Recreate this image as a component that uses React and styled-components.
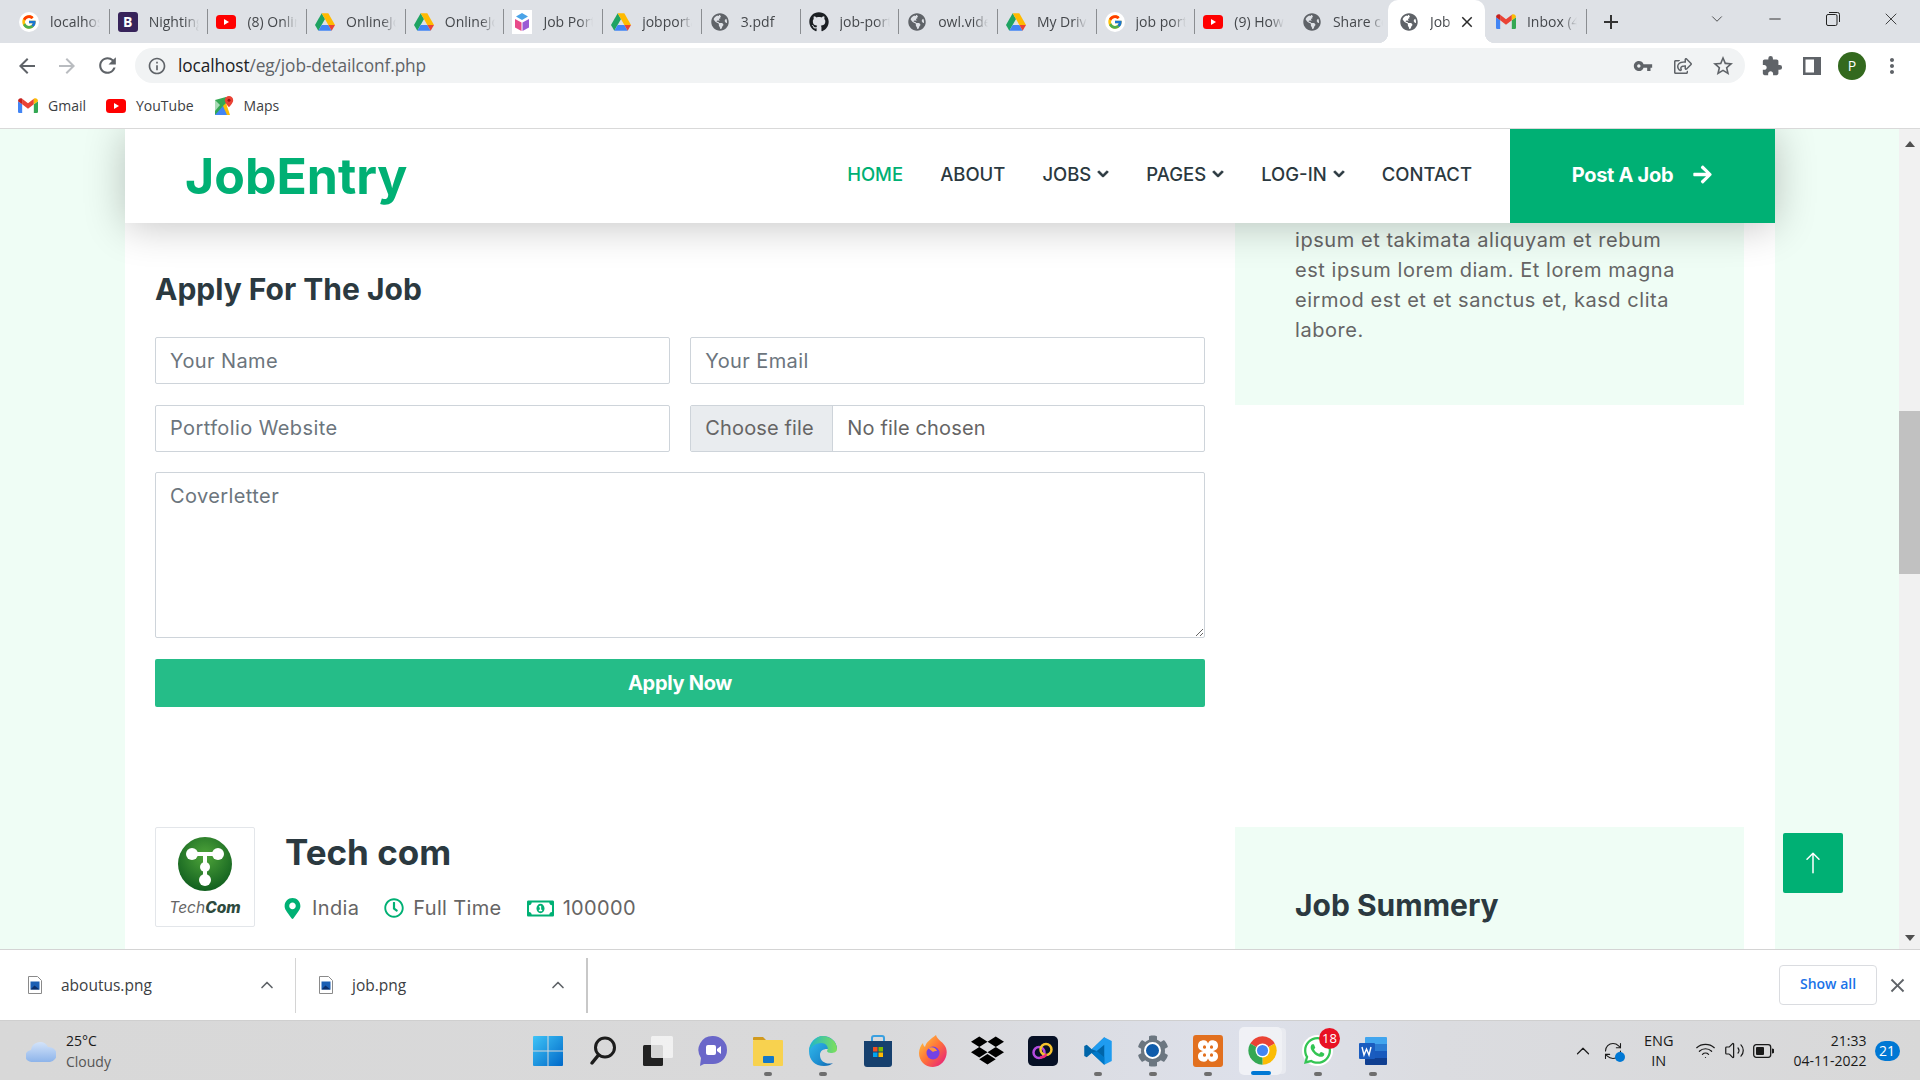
import styled, { createGlobalStyle } from "styled-components";
import {
  MdArrowBack, MdArrowForward, MdRefresh, MdInfoOutline, MdVpnKey, MdStarBorder,
  MdMoreVert, MdExtension, MdClose, MdAdd,
} from "react-icons/md";
import {
  FaRegShareSquare, FaGithub, FaGlobeAmericas, FaChevronDown, FaArrowRight, FaMapMarkerAlt,
  FaRegClock, FaRegMoneyBillAlt, FaDropbox, FaCog, FaWhatsapp,
} from "react-icons/fa";
import { BsArrowUp } from "react-icons/bs";
import { FcGoogle } from "react-icons/fc";
import { ChevronDown, ChevronUp, Minus, X, Wifi, Volume2, RefreshCw } from "lucide-react";

const GREEN = "#00B074";
const MINT = "#EFFDF5";
const DARK = "#2B3940";
const TEXT = "#666565";
const BODY = `Inter, "Open Sans", sans-serif`;
const UI = `"Open Sans", "Noto Sans", sans-serif`;

const GlobalStyle = createGlobalStyle`
  html, body { margin: 0; padding: 0; background: #fff; }
  * { box-sizing: border-box; }
`;

/* ---------- small drawings ---------- */

const GoogleBadge = styled.span`
  width: 20px; height: 20px; border-radius: 50%; background: #fff;
  display: flex; align-items: center; justify-content: center;
`;
const GoogleIcon = () => <GoogleBadge><FcGoogle size={16} /></GoogleBadge>;

const BootstrapBadge = styled.span`
  width: 20px; height: 20px; border-radius: 3px; background: #37235a; color: #fff;
  font: 700 14px ${UI}; display: flex; align-items: center; justify-content: center;
`;
const BootstrapIcon = () => <BootstrapBadge>B</BootstrapBadge>;

const YoutubeIcon = () => (
  <svg width="20" height="14" viewBox="0 0 20 14">
    <rect width="20" height="14" rx="3.5" fill="#f00" />
    <path d="M8 4l5 3-5 3z" fill="#fff" />
  </svg>
);

const DriveIcon = () => (
  <svg width="20" height="18" viewBox="0 0 24 21">
    <path d="M8 0l4 7-8 14-4-7z" fill="#1ea362" />
    <path d="M8 0h8l8 14h-8z" fill="#ffba00" />
    <path d="M8 14h8l4 7H4z" fill="#4285f4" />
    <path d="M16 14h8l-4 7z" fill="#ea4335" />
  </svg>
);

const GmailIcon = () => (
  <svg width="20" height="15" viewBox="0 0 24 18">
    <path d="M0 4v12.5A1.5 1.5 0 0 0 1.5 18H5V7.5z" fill="#4285f4" />
    <path d="M24 4v12.5a1.5 1.5 0 0 1-1.5 1.5H19V7.5z" fill="#34a853" />
    <path d="M5 7.5l7 5.25 7-5.25V1l-7 5.25L5 1z" fill="#ea4335" />
    <path d="M0 4c0-3 3-4.500 5-3v6.500z" fill="#c5221f" />
    <path d="M24 4c0-3-3-4.500-5-3v6.500z" fill="#fbbc04" />
  </svg>
);

const MapsIcon = () => (
  <svg width="20" height="20" viewBox="0 0 20 20">
    <path d="M1 4l11-3v15L1 19z" fill="#34a853" />
    <path d="M1 19l8-9 6 9z" fill="#4285f4" />
    <path d="M1 4l5 5-5 6z" fill="#a8dab5" />
    <path d="M9 10l3-3 4 12h-3z" fill="#fbbc04" />
    <path d="M15 0a4.200 4.200 0 0 0-4.200 4.200C10.800 7.300 15 11 15 11s4.200-3.700 4.200-6.800A4.200 4.200 0 0 0 15 0z" fill="#ea4335" />
    <circle cx="15" cy="4.200" r="1.500" fill="#a50e0e" />
  </svg>
);

const CubeIcon = () => (
  <svg width="20" height="24" viewBox="0 0 20 24">
    <rect width="20" height="24" fill="#fff" />
    <path d="M10 3l6 3.500-6 3.500-6-3.500z" fill="#4aa3e8" />
    <path d="M3 9l6.500 3.500V21L3 17.500z" fill="#e84a8a" />
    <path d="M17 9l-6.500 3.500V21l6.500-3.500z" fill="#9b5bd4" />
  </svg>
);

const Globe = styled(FaGlobeAmericas)`color: #5f6368;`;
const Octocat = styled(FaGithub)`color: #1b1f23;`;

const FileIcon = () => (
  <svg width="14" height="18" viewBox="0 0 14 18">
    <path d="M.5.500h9l4 4v13H.500z" fill="#fff" stroke="#8a8a8a" />
    <rect x="2.500" y="5.500" width="9" height="8" fill="#1b5fb4" />
    <path d="M2.500 13.500l4-4 5 4z" fill="#0b2f6b" />
  </svg>
);

const CloudIcon = () => (
  <svg width="30" height="26" viewBox="0 0 30 26">
    <defs>
      <linearGradient id="cloud" x1="0" y1="0" x2="0" y2="1">
        <stop offset="0" stopColor="#d3e3f9" />
        <stop offset="1" stopColor="#8db4ea" />
      </linearGradient>
    </defs>
    <path d="M6 24a6 6 0 0 1-1-12A9 9 0 0 1 22 9a7.500 7.500 0 0 1 2 15z" fill="url(#cloud)" />
  </svg>
);

const WindowsIcon = () => (
  <svg width="30" height="30" viewBox="0 0 30 30">
    <defs>
      <linearGradient id="win" x1="0" y1="0" x2="1" y2="1">
        <stop offset="0" stopColor="#3fc4f7" />
        <stop offset="1" stopColor="#0068c8" />
      </linearGradient>
    </defs>
    <path d="M0 1a1 1 0 0 1 1-1h13.500v14.500H0zM15.500 0H29a1 1 0 0 1 1 1v13.500H15.500zM0 15.500h14.500V30H1a1 1 0 0 1-1-1zM15.500 15.500H30V29a1 1 0 0 1-1 1H15.500z" fill="url(#win)" />
  </svg>
);

const SearchIcon = () => (
  <svg width="28" height="30" viewBox="0 0 28 30" fill="none" stroke="#1c1c1c" strokeLinecap="round">
    <circle cx="16" cy="11.500" r="9.500" strokeWidth="3" />
    <path d="M9.500 19L3 27" strokeWidth="3.500" />
  </svg>
);

const TaskViewIcon = () => (
  <svg width="30" height="30" viewBox="0 0 30 30">
    <rect x="0" y="9" width="20" height="21" rx="1.500" fill="#222" />
    <rect x="8" y="0" width="22" height="22" rx="1.500" fill="#f4f4f4" opacity=".85" />
  </svg>
);

const ChatIcon = () => (
  <svg width="30" height="32" viewBox="0 0 30 32">
    <path d="M15 1a14 14 0 0 1 0 28H6l-4 2 1-8A14 14 0 0 1 15 1z" fill="#6a67c9" />
    <rect x="8" y="10" width="10" height="10" rx="2" fill="#fff" />
    <path d="M19 14l4-3v8l-4-3z" fill="#fff" />
  </svg>
);

const FolderIcon = () => (
  <svg width="30" height="30" viewBox="0 0 30 30">
    <path d="M0 2a1 1 0 0 1 1-1h9l3 3h-13z" fill="#d19a1e" />
    <rect y="4" width="30" height="26" rx="1" fill="#f8d24f" />
    <rect x="10" y="20" width="11" height="7" rx="1" fill="#1478c8" />
  </svg>
);

const EdgeIcon = () => (
  <svg width="30" height="32" viewBox="0 0 30 32">
    <defs>
      <linearGradient id="edge" x1="0" y1="0" x2="1" y2="1">
        <stop offset="0" stopColor="#35c1f1" />
        <stop offset=".6" stopColor="#1d8ed0" />
        <stop offset="1" stopColor="#0c59a4" />
      </linearGradient>
      <linearGradient id="edgeTop" x1="0" y1="0" x2="1" y2="0">
        <stop offset="0" stopColor="#1fb6c9" />
        <stop offset="1" stopColor="#7ee05a" />
      </linearGradient>
    </defs>
    <path d="M15 1C7 1 1 8 1 16c0 9 6 15 15 15 4 0 7-1 9-3-6 2-13-1-13-8 0-4 3-6 7-6h10C29 7 23 1 15 1z" fill="url(#edge)" />
    <path d="M15 1c6 0 14 5 14 13 0 3-3 4-6 4-2 0-4-1-4-2 2-3 0-8-6-8-6 0-10 4-12 8C2 8 8 1 15 1z" fill="url(#edgeTop)" />
  </svg>
);

const StoreIcon = () => (
  <svg width="28" height="32" viewBox="0 0 28 32">
    <path d="M8 6V3a2 2 0 0 1 2-2h8a2 2 0 0 1 2 2v3" fill="none" stroke="#3aa0e0" strokeWidth="2" />
    <path d="M0 6h28v23a3 3 0 0 1-3 3H3a3 3 0 0 1-3-3z" fill="#16406e" />
    <rect x="9" y="12" width="4.500" height="4.500" fill="#f25022" />
    <rect x="14.500" y="12" width="4.500" height="4.500" fill="#7fba00" />
    <rect x="9" y="17.500" width="4.500" height="4.500" fill="#00a4ef" />
    <rect x="14.500" y="17.500" width="4.500" height="4.500" fill="#ffb900" />
  </svg>
);

const FirefoxIcon = () => (
  <svg width="30" height="32" viewBox="0 0 30 32">
    <defs>
      <linearGradient id="fox" x1="0" y1="0" x2="1" y2="1">
        <stop offset="0" stopColor="#ffd23e" />
        <stop offset=".5" stopColor="#ff7139" />
        <stop offset="1" stopColor="#e31587" />
      </linearGradient>
    </defs>
    <path d="M18 0c1 5 8 7 10 13 3 9-4 19-13 19C7 32 1 26 1 18c0-4 2-8 4-10 0 2 1 3 2 4 1-5 6-8 11-12z" fill="url(#fox)" />
    <circle cx="15" cy="18" r="6.500" fill="#7542e5" />
    <path d="M10 13c4-2 8 0 9 3-2 0-3 0-4 1z" fill="#ff9640" />
  </svg>
);

const AdobeBadge = styled.span`
  width: 30px; height: 30px; border-radius: 5px; background: #061025;
  display: flex; align-items: center; justify-content: center;
`;
const AdobeIcon = () => (
  <AdobeBadge>
    <svg width="22" height="18" viewBox="0 0 22 18" fill="none" strokeWidth="2.500">
      <circle cx="7" cy="10.500" r="5.500" stroke="#b44be0" />
      <circle cx="14" cy="7.500" r="5.500" stroke="#f5c22e" />
      <path d="M8 15c3 1 6-1 6-3" stroke="#ee2a7b" />
    </svg>
  </AdobeBadge>
);

const VsCodeIcon = () => (
  <svg width="30" height="32" viewBox="0 0 24 24">
    <path d="M17 1L7 10.500 3 7 1 8v8l2 1 4-3.500L17 23l2-3V4z" fill="#0065a9" />
    <path d="M17 1l6 3v16l-6 3V7l-6 5-4-1.500z" fill="#1f9cf0" />
    <path d="M17 17v6l-10-9.500L11 12z" fill="#0078c8" />
  </svg>
);

const SettingsWrap = styled.span`
  position: relative; display: flex; align-items: center; justify-content: center; color: #6b7680;
  &::after {
    content: ""; position: absolute; width: 13px; height: 13px; border-radius: 50%;
    background: #0f5cab; border: 2px solid #fff; box-sizing: content-box;
  }
`;
const SettingsIcon = () => <SettingsWrap><FaCog size={32} /></SettingsWrap>;

const XamppIcon = () => (
  <svg width="30" height="32" viewBox="0 0 30 30" preserveAspectRatio="none">
    <rect width="30" height="30" rx="3" fill="#e2701f" />
    <path d="M11 5c-4 0-6 2-6 5s2 4 5 5c-3 1-5 2-5 5s2 5 6 5c2 0 3-1 4-3 1 2 2 3 4 3 4 0 6-2 6-5s-2-4-5-5c3-1 5-2 5-5s-2-5-6-5c-2 0-3 1-4 3-1-2-2-3-4-3z" fill="#fff" />
    <rect x="10" y="9.500" width="3" height="3.500" rx="1.500" fill="#e2701f" />
    <rect x="17" y="9.500" width="3" height="3.500" rx="1.500" fill="#e2701f" />
    <rect x="10" y="17" width="3" height="3.500" rx="1.500" fill="#e2701f" />
    <rect x="17" y="17" width="3" height="3.500" rx="1.500" fill="#e2701f" />
  </svg>
);

const ChromeIcon = () => (
  <svg width="31" height="31" viewBox="0 0 24 24">
    <path d="M12 12L2.500 6.500a11 11 0 0 1 19 0z" fill="#ea4335" />
    <path d="M12 12l9.500-5.500A11 11 0 0 1 12 23z" fill="#fbbc04" />
    <path d="M12 12v11A11 11 0 0 1 2.500 6.500z" fill="#34a853" />
    <circle cx="12" cy="12" r="5.400" fill="#fff" />
    <circle cx="12" cy="12" r="4.300" fill="#4285f4" />
  </svg>
);

const WhatsappBadge = styled.span`
  width: 31px; height: 31px; border-radius: 50%; background: #fff; color: #33c553;
  display: flex; align-items: center; justify-content: center;
`;
const WhatsappIcon = () => <WhatsappBadge><FaWhatsapp size={31} /></WhatsappBadge>;

const WordIcon = () => (
  <svg width="30" height="30" viewBox="0 0 30 30">
    <path d="M8 1h20a1 1 0 0 1 1 1v6H7V2a1 1 0 0 1 1-1z" fill="#41a5ee" />
    <rect x="7" y="8" width="22" height="7" fill="#2b7cd3" />
    <rect x="7" y="15" width="22" height="7" fill="#185abd" />
    <path d="M7 22h22v6a1 1 0 0 1-1 1H8a1 1 0 0 1-1-1z" fill="#103f91" />
    <rect x="1" y="7" width="16" height="16" rx="1" fill="#1a5cbf" />
    <path d="M4 11l2 8 2.500-6 2.500 6 2-8" fill="none" stroke="#fff" strokeWidth="1.400" />
  </svg>
);

const RestoreIcon = () => (
  <svg width="14" height="14" viewBox="0 0 14 14" fill="none" stroke="#222" strokeWidth="1">
    <rect x=".5" y="2.500" width="10.500" height="11" rx="1.500" />
    <path d="M3 .5h8.500a2 2 0 0 1 2 2V10" />
  </svg>
);

const SidePanelIcon = () => (
  <svg width="18" height="18" viewBox="0 0 18 18">
    <path d="M0 0h18v18H0z" fill="#5f6368" />
    <path d="M2.500 2.500h8.500v13H2.500z" fill="#fff" />
  </svg>
);

const BatteryIcon = () => (
  <svg width="21" height="14" viewBox="0 0 21 14">
    <rect x=".7" y=".7" width="17" height="12.600" rx="2.500" fill="none" stroke="#1a1a1a" strokeWidth="1.300" />
    <rect x="3" y="3" width="8" height="8" rx="1" fill="#1a1a1a" />
    <path d="M19 4.500a2.500 2.500 0 0 1 0 5z" fill="#1a1a1a" />
  </svg>
);

const TechComMark = () => (
  <svg width="56" height="56" viewBox="0 0 56 56">
    <defs>
      <radialGradient id="tc" cx=".5" cy=".35" r=".7">
        <stop offset="0" stopColor="#4fa53a" />
        <stop offset="1" stopColor="#0c5a1d" />
      </radialGradient>
    </defs>
    <circle cx="28" cy="28" r="27" fill="url(#tc)" />
    <path d="M15 18H41M28 18V47" stroke="#fff" strokeWidth="4" />
    <circle cx="15" cy="18" r="6" fill="#fff" />
    <circle cx="41" cy="18" r="6" fill="#fff" />
    <circle cx="28" cy="31" r="5" fill="#fff" />
    <circle cx="28" cy="44" r="6" fill="#fff" />
  </svg>
);

/* ---------- browser chrome ---------- */

const Screen = styled.div`
  width: 1920px; height: 1080px; display: flex; flex-direction: column; overflow: hidden;
  background: #fff;
`;

const TabStrip = styled.div`
  height: 43px; flex: none; display: flex; align-items: stretch; padding-left: 8px;
  background: #dee1e6;
`;

const Tab = styled.div`
  position: relative; width: ${(p) => p.$width || 98.7}px; flex: none; display: flex; align-items: center;
  padding-left: 11px; gap: 11px;
  border-radius: 10px 10px 0 0;
  background: ${(p) => (p.$active ? "#fff" : "transparent")};
  &::before {
    content: ""; position: absolute; left: 2px; top: 9px; width: 1px; height: 25px;
    background: ${(p) => (p.$sep ? "#8a8d91" : "transparent")};
  }
  ${(p) => p.$active && `
    &::before {
      left: -10px; top: auto; bottom: 0; width: 10px; height: 10px;
      background: radial-gradient(circle at 0 0, transparent 10px, #fff 10.5px);
    }
    &::after {
      content: ""; position: absolute; right: -10px; bottom: 0; width: 10px; height: 10px;
      background: radial-gradient(circle at 100% 0, transparent 10px, #fff 10.5px);
    }
  `}
`;

const TabIcon = styled.span`
  width: 20px; flex: none; display: flex; align-items: center; justify-content: center;
`;

const TabTitle = styled.span`
  width: ${(p) => (p.$active ? "24px" : "50px")}; overflow: hidden; white-space: nowrap;
  font: 14px ${UI}; color: #45484c; margin-bottom: 1px;
  -webkit-mask-image: linear-gradient(90deg, #000 72%, transparent);
  mask-image: linear-gradient(90deg, #000 72%, transparent);
`;

const TabClose = styled(MdClose)`
  color: #2a2a2a; margin-left: -7px; flex: none;
`;

const NewTab = styled.div`
  position: relative; width: 54px; flex: none; display: flex; align-items: center;
  padding-left: 15px; color: #333;
  &::before {
    content: ""; position: absolute; left: 2px; top: 9px; width: 1px; height: 25px; background: #8a8d91;
  }
`;

const WindowControls = styled.div`
  margin-left: auto; display: flex; align-items: flex-start;
`;

const WindowButton = styled.span`
  width: 58px; height: 38px; display: flex; align-items: center; justify-content: center; color: #222;
`;

const Toolbar = styled.div`
  height: 40px; flex: none; display: flex; align-items: flex-end; padding-left: 7px; background: #fff;
`;

const ToolButton = styled.span`
  width: 40px; height: 35px; flex: none; display: flex; align-items: center; justify-content: center;
  color: ${(p) => p.$color || "#5f6368"};
`;

const Omnibox = styled.div`
  width: 1610px; height: 35px; margin: 0 7px 0 8px; border-radius: 18px; background: #f1f3f4;
  display: flex; align-items: center; padding: 0 2px 0 12px;
`;

const Address = styled.span`
  font: 17.3px ${UI}; color: #5f6368; margin: 0 0 1px 11px; flex: 1; letter-spacing: -.1px;
  b { font-weight: 400; color: #202124; }
`;

const Avatar = styled.span`
  width: 28px; height: 28px; border-radius: 50%; background: #33691e; color: #fff;
  font: 14px ${UI}; display: flex; align-items: center; justify-content: center;
`;

const Bookmarks = styled.div`
  height: 46px; flex: none; display: flex; align-items: center; gap: 20px; padding-left: 18px;
  background: #fff; border-bottom: 1px solid #d9d9d9;
`;

const Bookmark = styled.span`
  display: flex; align-items: center; gap: 10px; font: 14px ${UI}; color: #3c4043;
`;

/* ---------- job page ---------- */

const Viewport = styled.div`
  flex: 1; min-height: 0; display: flex; overflow: hidden; background: ${MINT};
`;

const Page = styled.div`
  width: 1650px; margin-left: 125px; flex: none; background: #fff; display: flex; flex-direction: column;
`;

const NavBar = styled.nav`
  position: relative; z-index: 2; height: 94px; flex: none; display: flex; align-items: stretch;
  padding-left: 60px; background: #fff; box-shadow: 0 3px 42px rgba(0, 0, 0, .24);
`;

const Brand = styled.h1`
  margin: 0; align-self: center; font: 700 50px/1 ${BODY}; color: ${GREEN};
`;

const NavLinks = styled.div`
  margin-left: auto; display: flex; align-items: center; gap: 37px; padding-right: 38px;
  padding-bottom: 5px;
`;

const NavLink = styled.a`
  display: flex; align-items: center; gap: 6px; font: 500 18.500px ${BODY};
  color: ${(p) => (p.$active ? GREEN : DARK)};
`;

const NavCaret = styled(FaChevronDown)`
  stroke: currentColor; stroke-width: 40px;
`;

const PostButton = styled.a`
  width: 265px; flex: none; display: flex; align-items: center; justify-content: center; gap: 19px;
  background: ${GREEN}; color: #fff; font: 700 20px ${BODY}; letter-spacing: -.3px;
  padding-bottom: 3px;
`;

const Columns = styled.div`
  display: grid; grid-template-columns: 1050px 509px; column-gap: 30px; padding-left: 30px;
  align-items: start;
`;

const ApplySection = styled.section`
  padding: 48px 0 120px;
`;

const SectionTitle = styled.h3`
  margin: 0; font: 700 30px/36px ${BODY}; color: ${DARK};
`;

const ApplyForm = styled.form`
  margin-top: 30px; display: grid; grid-template-columns: 1fr 1fr; gap: 20.500px;
`;

const Field = styled.input`
  height: 47px; width: 100%; padding: 0 14px; border: 1px solid #ced4da; border-radius: 2px;
  font: 20px ${BODY}; letter-spacing: .4px; color: ${TEXT}; background: #fff; outline: none;
  &::placeholder { color: #6c757d; opacity: 1; }
`;

const FilePicker = styled.label`
  height: 47px; display: flex; align-items: stretch; border: 1px solid #ced4da; border-radius: 2px;
  font: 20px ${BODY}; letter-spacing: .15px; color: ${TEXT}; background: #fff; overflow: hidden;
`;

const FileButton = styled.span`
  width: 142px; flex: none; display: flex; align-items: center; padding-left: 14px;
  background: #e9ecef; border-right: 1px solid #ced4da;
`;

const FileName = styled.span`
  display: flex; align-items: center; padding-left: 14px;
`;

const CoverLetter = styled.textarea`
  grid-column: 1 / -1; height: 166px; padding: 8px 14px; border: 1px solid #ced4da; border-radius: 2px;
  font: 20px/30px ${BODY}; letter-spacing: .4px; color: ${TEXT}; background: #fff; outline: none; display: block;
  &::placeholder { color: #6c757d; opacity: 1; }
`;

const ApplyButton = styled.button`
  grid-column: 1 / -1; height: 48px; border: 0; border-radius: 2px; background: #25bd88; color: #fff;
  font: 700 20px ${BODY}; letter-spacing: -.3px;
`;

const AboutPanel = styled.aside`
  background: ${MINT}; padding: 2px 60px 60px;
  p { margin: 0; font: 20px/30px ${BODY}; color: ${TEXT}; letter-spacing: .55px; }
`;

const JobRow = styled.div`
  display: flex; gap: 30px;
`;

const LogoBox = styled.div`
  width: 100px; height: 100px; flex: none; padding: 8px 0 0; border: 1px solid #e3e6ea; border-radius: 2px;
  display: flex; flex-direction: column; align-items: center; gap: 7px;
`;

const LogoText = styled.span`
  font: italic 400 15.500px/18px ${BODY}; color: #666;
  b { font-weight: 800; color: #2e4a3e; }
`;

const JobInfo = styled.div`
  display: flex; flex-direction: column; gap: 21px; padding-top: 3px;
`;

const JobTitle = styled.h2`
  margin: 0; font: 700 35px/44px ${BODY}; color: ${DARK};
`;

const JobMeta = styled.div`
  display: flex; align-items: center; gap: 25px; margin-left: -3px;
`;

const MetaItem = styled.span`
  display: flex; align-items: center; gap: 9px; font: 20px/26px ${BODY}; letter-spacing: .35px; color: ${TEXT};
  svg { color: ${GREEN}; flex: none; }
`;

const SummaryPanel = styled.aside`
  background: ${MINT}; padding: 60px; height: 300px;
`;

const BackToTop = styled.a`
  position: absolute; left: 1783px; top: 833px; width: 60px; height: 60px; border-radius: 2px;
  background: ${GREEN}; color: #fff; display: flex; align-items: center; justify-content: center;
  z-index: 3;
`;

const Scrollbar = styled.div`
  width: 21px; margin-left: auto; flex: none; background: #f1f1f1; display: flex; flex-direction: column;
  align-items: center; padding-top: 12px;
`;

const ScrollArrow = styled.span`
  width: 0; height: 0; border-left: 5px solid transparent; border-right: 5px solid transparent;
  ${(p) => (p.$down
    ? "border-top: 6px solid #505050; margin-top: auto; margin-bottom: 8px;"
    : "border-bottom: 6px solid #505050;")}
`;

const ScrollThumb = styled.span`
  width: 100%; height: 163px; margin-top: 264px; background: #c1c1c1;
`;

/* ---------- downloads + taskbar ---------- */

const DownloadBar = styled.div`
  height: 71px; flex: none; display: flex; align-items: center; background: #fff;
  border-top: 1px solid #d4d4d4;
`;

const DownloadItem = styled.div`
  width: ${(p) => p.$width}px; height: 55px; flex: none; display: flex; align-items: center;
  padding-left: ${(p) => p.$pad}px; gap: 19px;
  border-right: ${(p) => (p.$thick ? "2px solid #c8c8c8" : "1px solid #d4d4d4")};
  font: 15.500px ${UI}; color: #3c4043;
  svg:last-child { margin-left: auto; margin-right: 18px; color: #5f6368; }
`;

const ShowAll = styled.span`
  margin-left: auto; width: 98px; height: 40px; padding-bottom: 3px; border: 1px solid #dadce0; border-radius: 4px;
  display: flex; align-items: center; justify-content: center;
  font: 600 14px ${UI}; color: #1a73e8;
`;

const DownloadClose = styled(MdClose)`
  color: #5f6368; margin: 0 11px 0 9px;
`;

const Taskbar = styled.div`
  height: 60px; flex: none; display: grid; grid-template-columns: 520px 880px 1fr; align-items: center;
  background: linear-gradient(90deg, #d8d8d8 0%, #d9d9da 45%, #dde0ea 65%, #dbdce0 75%, #d8d8d8 100%);
  border-top: 1px solid #cfcfcf;
`;

const Weather = styled.div`
  display: flex; align-items: center; gap: 10px; padding-left: 26px;
`;

const WeatherText = styled.div`
  font: 14px/21px ${UI}; color: #1a1a1a;
  small { display: block; font-size: 14px; color: #555; }
`;

const TaskIcons = styled.div`
  display: grid; grid-template-columns: repeat(16, 55px); align-items: center;
`;

const TaskIcon = styled.div`
  position: relative; height: 59px; display: flex; align-items: center; justify-content: center;
  ${(p) => p.$current && `
    &::before {
      content: ""; position: absolute; left: 4px; right: 8px; top: 6px; bottom: 5px; border-radius: 5px;
      background: rgba(255,255,255,.55); box-shadow: 5px 0 0 -1px rgba(255,255,255,.35);
    }
    & > * { position: relative; }
  `}
  ${(p) => p.$running && `
    &::after {
      content: ""; position: absolute; left: 50%; bottom: 4px; width: 8px; height: 4px; margin-left: -4px;
      border-radius: 2px; background: #6e6e6e;
    }
  `}
`;

const ActiveMark = styled.span`
  position: absolute !important; left: 50%; bottom: 5px; width: 20px; height: 4px; margin-left: -12px;
  border-radius: 2px; background: #0078d4;
`;

const UnreadBadge = styled.span`
  position: absolute !important; top: 7px; left: 29px; width: 21px; height: 21px; border-radius: 50%;
  background: #e81123; color: #fff; font: 13px/21px ${UI}; text-align: center;
`;

const Tray = styled.div`
  display: flex; align-items: center; padding-left: 172px; color: #1a1a1a; position: relative;
`;

const SyncIcon = styled.span`
  position: relative; display: flex; margin-left: 9px;
  &::after {
    content: ""; position: absolute; right: -2px; bottom: -1px; width: 10px; height: 10px; border-radius: 50%;
    background: #0078d4;
  }
`;

const TrayLang = styled.div`
  margin-left: 21px; font: 14.500px/20px ${UI}; text-align: center;
`;

const TrayGlyphs = styled.div`
  margin-left: 21px; display: flex; gap: 8px; align-items: center;
`;

const Clock = styled.div`
  margin-left: 7px; width: 86px; font: 14px/20px ${UI}; text-align: right; white-space: nowrap;
  display: flex; flex-direction: column; align-items: flex-end;
`;

const NotifyCount = styled.span`
  margin-left: 8px; width: 25px; height: 20px; border-radius: 10px; background: #0078d4; color: #fff;
  font: 14px/20px ${UI}; text-align: center;
`;

/* ---------- data ---------- */

const tabs = [
  { title: "localhost", icon: <GoogleIcon /> },
  { title: "Nightingale", icon: <BootstrapIcon /> },
  { title: "(8) Online", icon: <YoutubeIcon /> },
  { title: "OnlineJob", icon: <DriveIcon /> },
  { title: "OnlineJob", icon: <DriveIcon /> },
  { title: "Job Portal", icon: <CubeIcon /> },
  { title: "jobportal", icon: <DriveIcon /> },
  { title: "3.pdf", icon: <Globe size={18} /> },
  { title: "job-portal", icon: <Octocat size={20} /> },
  { title: "owl.video", icon: <Globe size={18} /> },
  { title: "My Drive", icon: <DriveIcon /> },
  { title: "job portal", icon: <GoogleIcon /> },
  { title: "(9) How", icon: <YoutubeIcon /> },
  { title: "Share code", icon: <Globe size={18} />, noSep: true, width: 97 },
  { title: "Job", icon: <Globe size={18} />, active: true, width: 97 },
  { title: "Inbox (4)", icon: <GmailIcon />, noSep: true },
];

const taskApps = [
  { icon: <WindowsIcon /> },
  { icon: <SearchIcon /> },
  { icon: <TaskViewIcon /> },
  { icon: <ChatIcon /> },
  { icon: <FolderIcon />, running: true },
  { icon: <EdgeIcon />, running: true },
  { icon: <StoreIcon /> },
  { icon: <FirefoxIcon /> },
  { icon: <FaDropbox size={33} color="#000" /> },
  { icon: <AdobeIcon /> },
  { icon: <VsCodeIcon />, running: true },
  { icon: <SettingsIcon />, running: true },
  { icon: <XamppIcon />, running: true },
  { icon: <ChromeIcon />, current: true },
  { icon: <WhatsappIcon />, running: true, badge: "18" },
  { icon: <WordIcon />, running: true },
];

export default function App() {
  return (
    <Screen>
      <GlobalStyle />
      <TabStrip>
        {tabs.map((t, i) => (
          <Tab key={i} $active={t.active} $width={t.width} $sep={!t.active && !t.noSep && i > 0}>
            <TabIcon>{t.icon}</TabIcon>
            <TabTitle $active={t.active}>{t.title}</TabTitle>
            {t.active && <TabClose size={18} />}
          </Tab>
        ))}
        <NewTab><MdAdd size={24} /></NewTab>
        <WindowControls>
          <WindowButton><ChevronDown size={18} strokeWidth={1} /></WindowButton>
          <WindowButton><Minus size={18} strokeWidth={1.2} /></WindowButton>
          <WindowButton><RestoreIcon /></WindowButton>
          <WindowButton><X size={20} strokeWidth={1} /></WindowButton>
        </WindowControls>
      </TabStrip>

      <Toolbar>
        <ToolButton><MdArrowBack size={24} /></ToolButton>
        <ToolButton $color="#b9bcc0"><MdArrowForward size={24} /></ToolButton>
        <ToolButton><MdRefresh size={25} /></ToolButton>
        <Omnibox>
          <MdInfoOutline size={20} color="#5f6368" />
          <Address><b>localhost</b>/eg/job-detailconf.php</Address>
          <ToolButton><MdVpnKey size={20} /></ToolButton>
          <ToolButton><FaRegShareSquare size={18} /></ToolButton>
          <ToolButton><MdStarBorder size={24} /></ToolButton>
        </Omnibox>
        <ToolButton><MdExtension size={22} /></ToolButton>
        <ToolButton><SidePanelIcon /></ToolButton>
        <ToolButton><Avatar>P</Avatar></ToolButton>
        <ToolButton><MdMoreVert size={24} /></ToolButton>
      </Toolbar>

      <Bookmarks>
        <Bookmark><GmailIcon />Gmail</Bookmark>
        <Bookmark><YoutubeIcon />YouTube</Bookmark>
        <Bookmark><MapsIcon />Maps</Bookmark>
      </Bookmarks>

      <Viewport>
        <Page>
          <NavBar>
            <Brand>JobEntry</Brand>
            <NavLinks>
              <NavLink $active>HOME</NavLink>
              <NavLink>ABOUT</NavLink>
              <NavLink>JOBS <NavCaret size={12} /></NavLink>
              <NavLink>PAGES <NavCaret size={12} /></NavLink>
              <NavLink>LOG-IN <NavCaret size={12} /></NavLink>
              <NavLink>CONTACT</NavLink>
            </NavLinks>
            <PostButton>Post A Job <FaArrowRight size={21} /></PostButton>
          </NavBar>

          <Columns>
            <ApplySection>
              <SectionTitle>Apply For The Job</SectionTitle>
              <ApplyForm>
                <Field placeholder="Your Name" />
                <Field placeholder="Your Email" />
                <Field placeholder="Portfolio Website" />
                <FilePicker>
                  <FileButton>Choose file</FileButton>
                  <FileName>No file chosen</FileName>
                </FilePicker>
                <CoverLetter placeholder="Coverletter" />
                <ApplyButton type="button">Apply Now</ApplyButton>
              </ApplyForm>
            </ApplySection>
            <AboutPanel>
              <p>ipsum et takimata aliquyam et rebum est ipsum lorem diam. Et lorem magna eirmod est et et sanctus et, kasd clita labore.</p>
            </AboutPanel>

            <JobRow>
              <LogoBox>
                <TechComMark />
                <LogoText>Tech<b>Com</b></LogoText>
              </LogoBox>
              <JobInfo>
                <JobTitle>Tech com</JobTitle>
                <JobMeta>
                  <MetaItem><FaMapMarkerAlt size={21} />India</MetaItem>
                  <MetaItem><FaRegClock size={20} />Full Time</MetaItem>
                  <MetaItem><FaRegMoneyBillAlt size={27} />100000</MetaItem>
                </JobMeta>
              </JobInfo>
            </JobRow>
            <SummaryPanel>
              <SectionTitle>Job Summery</SectionTitle>
            </SummaryPanel>
          </Columns>
        </Page>
        <Scrollbar>
          <ScrollArrow />
          <ScrollThumb />
          <ScrollArrow $down />
        </Scrollbar>
      </Viewport>
      <BackToTop><BsArrowUp size={24} /></BackToTop>

      <DownloadBar>
        <DownloadItem $width={296} $pad={28}><FileIcon />aboutus.png<ChevronUp size={20} /></DownloadItem>
        <DownloadItem $width={292} $pad={23} $thick><FileIcon />job.png<ChevronUp size={20} /></DownloadItem>
        <ShowAll>Show all</ShowAll>
        <DownloadClose size={23} />
      </DownloadBar>

      <Taskbar>
        <Weather>
          <CloudIcon />
          <WeatherText>25°C<small>Cloudy</small></WeatherText>
        </Weather>
        <TaskIcons>
          {taskApps.map((a, i) => (
            <TaskIcon key={i} $running={a.running} $current={a.current}>
              {a.icon}
              {a.badge && <UnreadBadge>{a.badge}</UnreadBadge>}
              {a.current && <ActiveMark />}
            </TaskIcon>
          ))}
        </TaskIcons>
        <Tray>
          <ChevronUp size={22} strokeWidth={1.3} />
          <SyncIcon><RefreshCw size={20} strokeWidth={1.3} /></SyncIcon>
          <TrayLang>ENG<br />IN</TrayLang>
          <TrayGlyphs>
            <Wifi size={21} strokeWidth={1.4} />
            <Volume2 size={21} strokeWidth={1.4} />
            <BatteryIcon />
          </TrayGlyphs>
          <Clock><span>21:33</span><span>04-11-2022</span></Clock>
          <NotifyCount>21</NotifyCount>
        </Tray>
      </Taskbar>
    </Screen>
  );
}
